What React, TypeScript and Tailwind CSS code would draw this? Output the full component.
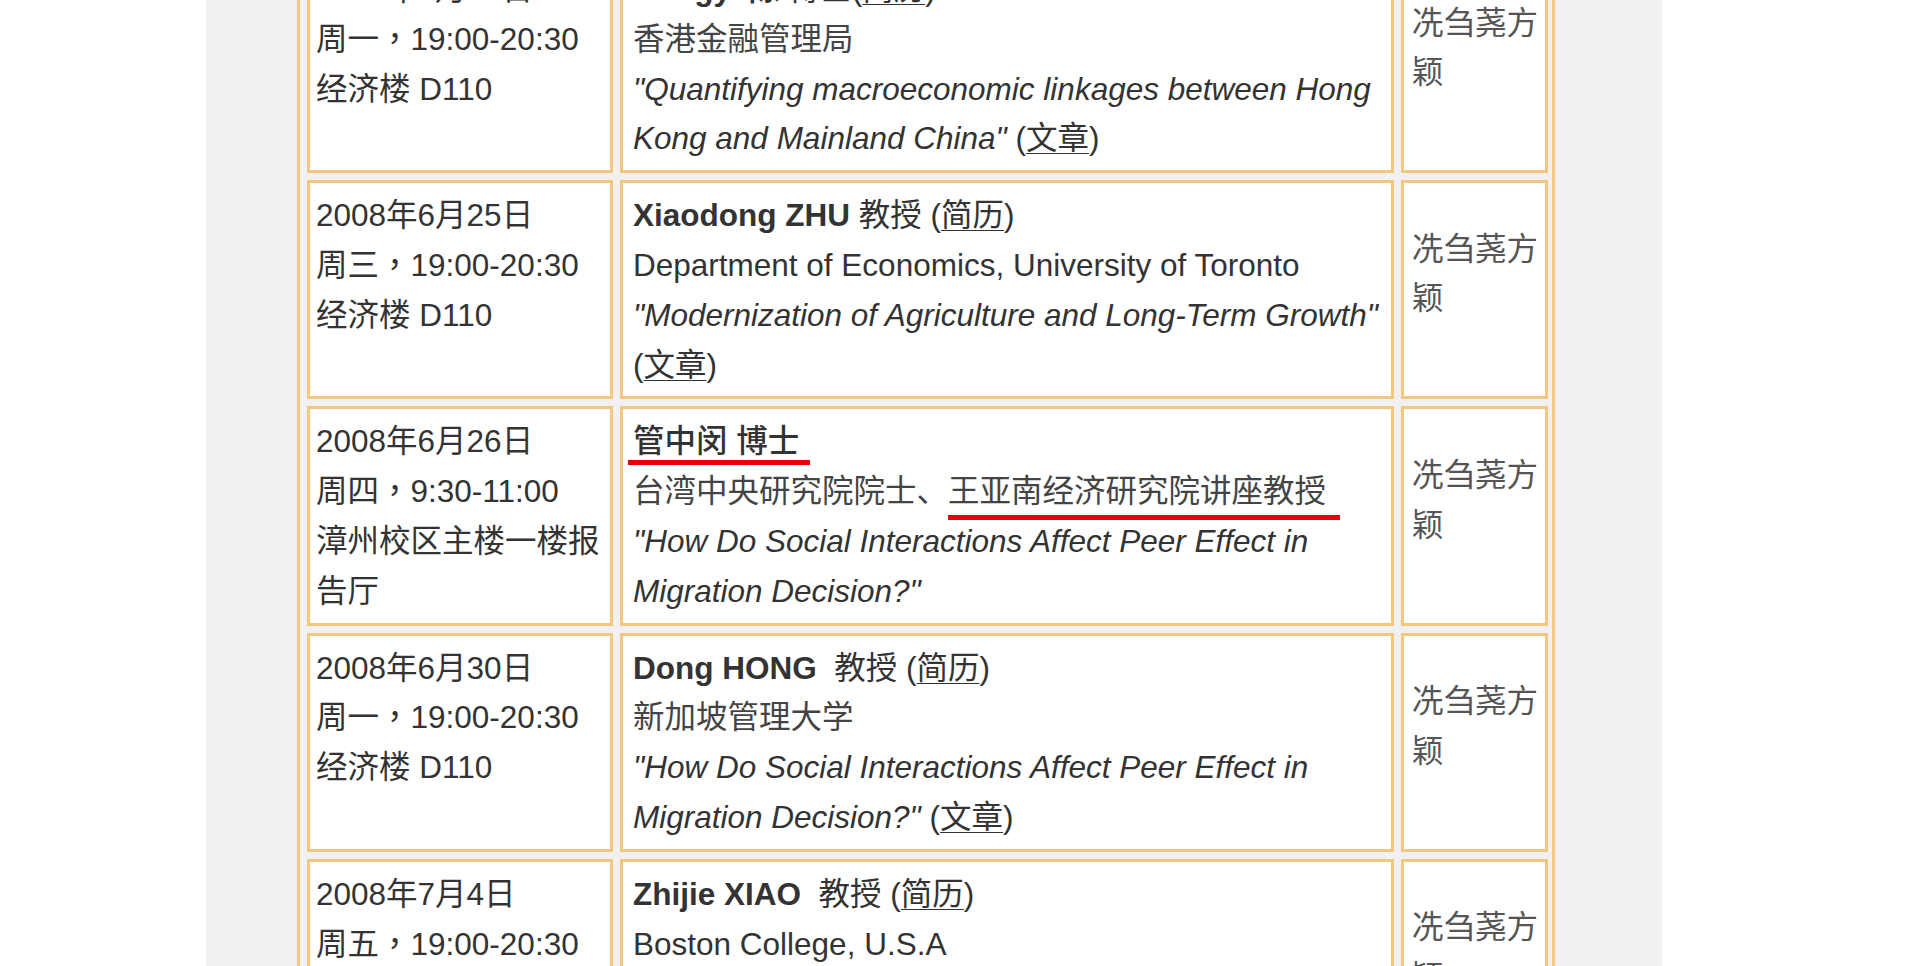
import React from "react";

const U = ({ children }: { children: React.ReactNode }) => (
  <span className="underline decoration-1 underline-offset-[4px]">{children}</span>
);

const Cm = () => <span className="font-['Noto_Sans_CJK_TC',sans-serif] leading-[0]">，</span>;

const C1 = ({ children }: { children: React.ReactNode }) => (
  <div className="bg-white border-[3px] border-[#f4c77f] pl-[6px] pr-[4px] pt-[8px] pb-[6px]">{children}</div>
);
const C2 = ({ children }: { children: React.ReactNode }) => (
  <div className="bg-white border-[3px] border-[#f4c77f] pl-[10px] pr-[6px] pt-[8px] pb-[6px]">{children}</div>
);
const C3 = () => (
  <div className="bg-white border-[3px] border-[#f4c77f] pl-[8px] pr-[3px] pt-[41.5px] pb-[7px] text-[#555]">
    冼刍荛方颖
  </div>
);

export default function App() {
  return (
    <div className="w-[1920px] h-[966px] overflow-hidden bg-white font-['Liberation_Sans','Noto_Sans_CJK_SC',sans-serif] text-[31.5px] leading-[49.8px] text-[#333]">
      <div className="ml-[206px] w-[1456px] h-full bg-[#f1f1f1] pl-[91px] flex flex-col">
        <div className="mt-[-56px] w-[1258px] border-[3px] border-[#f4c77f] pl-[7px] pr-[4px] pt-[7px] grid grid-cols-[306px_774px_147px] gap-x-[7px] gap-y-[7px]">
          {/* Row 1 */}
          <C1>
            <div>2008年6月23日</div>
            <div>周一<Cm />19:00-20:30</div>
            <div>经济楼 D110</div>
          </C1>
          <C2>
            <div>
              <b>Hongyi 陈</b> 博士(<U>简历</U>)
            </div>
            <div className="text-[#444]">香港金融管理局</div>
            <div>
              <i>"Quantifying macroeconomic linkages between Hong Kong and Mainland China"</i> (<U>文章</U>)
            </div>
          </C2>
          <C3 />
          {/* Row 2 */}
          <C1>
            <div>2008年6月25日</div>
            <div>周三<Cm />19:00-20:30</div>
            <div>经济楼 D110</div>
          </C1>
          <C2>
            <div>
              <b>Xiaodong ZHU</b> 教授 (<U>简历</U>)
            </div>
            <div>Department of Economics, University of Toronto</div>
            <div>
              <i>"Modernization of Agriculture and Long-Term Growth"</i> (<U>文章</U>)
            </div>
          </C2>
          <C3 />
          {/* Row 3 */}
          <C1>
            <div>2008年6月26日</div>
            <div>周四<Cm />9:30-11:00</div>
            <div>漳州校区主楼一楼报告厅</div>
          </C1>
          <C2>
            <div>
              <span className="relative font-medium">
                管中闵 博士
                <span className="absolute left-[-5px] right-[-11px] top-[36.5px] h-[5px] bg-[#e8000b]" />
              </span>
            </div>
            <div className="text-[#444]">
              台湾中央研究院院士、
              <span className="relative">
                王亚南经济研究院讲座教授
                <span className="absolute left-0 right-[-14px] top-[42px] h-[5px] bg-[#e8000b]" />
              </span>
            </div>
            <div>
              <i>"How Do Social Interactions Affect Peer Effect in Migration Decision?"</i>
            </div>
          </C2>
          <C3 />
          {/* Row 4 */}
          <C1>
            <div>2008年6月30日</div>
            <div>周一<Cm />19:00-20:30</div>
            <div>经济楼 D110</div>
          </C1>
          <C2>
            <div>
              <b>Dong HONG</b>&nbsp; 教授 (<U>简历</U>)
            </div>
            <div className="text-[#444]">新加坡管理大学</div>
            <div>
              <i>"How Do Social Interactions Affect Peer Effect in Migration Decision?"</i> (<U>文章</U>)
            </div>
          </C2>
          <C3 />
          {/* Row 5 */}
          <C1>
            <div>2008年7月4日</div>
            <div>周五<Cm />19:00-20:30</div>
            <div>经济楼 D110</div>
          </C1>
          <C2>
            <div>
              <b>Zhijie XIAO</b>&nbsp; 教授 (<U>简历</U>)
            </div>
            <div>Boston College, U.S.A</div>
            <div>
              <i>"Testing for Cointegration"</i> (<U>文章</U>)
            </div>
          </C2>
          <C3 />
        </div>
      </div>
    </div>
  );
}
